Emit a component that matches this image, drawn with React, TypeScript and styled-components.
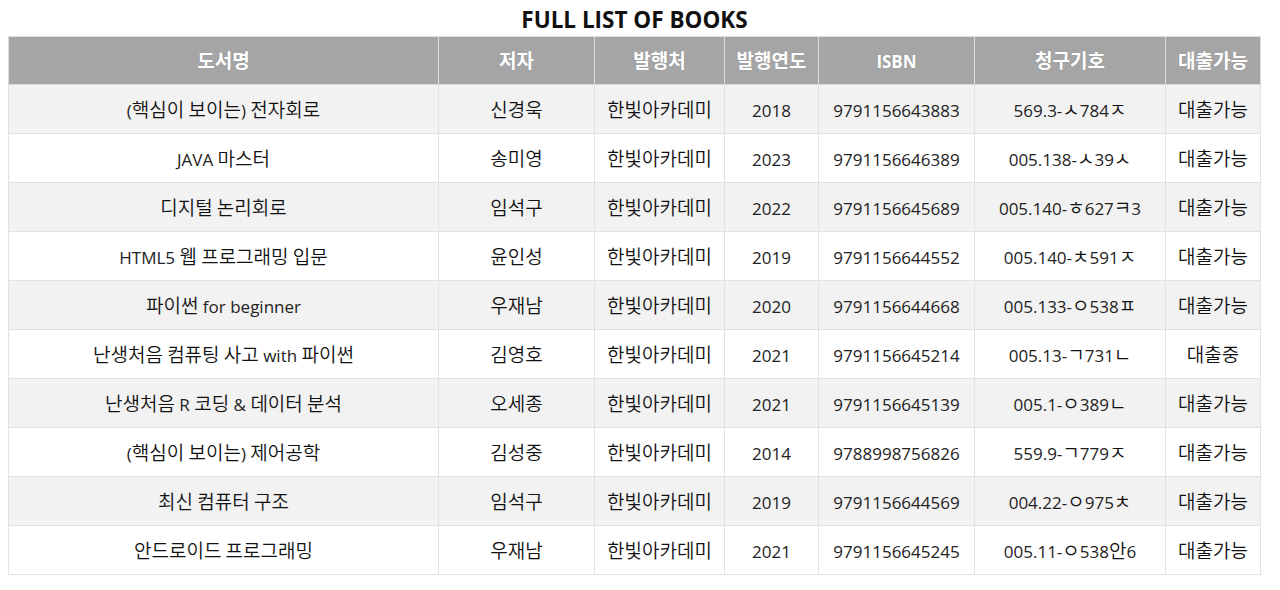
import React from 'react';
import styled, { createGlobalStyle } from 'styled-components';

/**
 * Define stylesheet.
 */
const GlobalStyle = createGlobalStyle`
    body {
        margin: 8px;
        background-color: #fff;
        font-family: "Open Sans", "Noto Sans CJK KR", sans-serif;
        color: #222;
    }
`;
const Table = styled.table`
    width: 1252px;
    table-layout: fixed;
    border-collapse: collapse;
`;
const Caption = styled.caption`
    height: 24px;
    padding-bottom: 4px;
    font-size: 22.5px;
    font-weight: 700;
    line-height: 24px;
    color: #111;
`;
const HeadCell = styled.th`
    height: 46px;
    padding: 1px 0 0;
    font-size: 17px;
    font-weight: 700;
    color: #fff;
    background-color: #a5a5a5;
    border: 1px solid #dcdcdc;
    text-shadow: 0 0 1px rgba(0,0,0,.15);
`;
const Row = styled.tr<{ striped: boolean }>`
    background-color: ${(props) => props.striped ? '#f2f2f2' : '#fff'};
`;
const Cell = styled.td`
    height: 46px;
    padding: 2px 0 0;
    font-size: 17px;
    text-align: center;
    border: 1px solid #e2e2e2;
`;
const Hangul = styled.span<{ strong?: boolean }>`
    font-family: "Noto Sans CJK KR", sans-serif;
    font-size: 19px;
    font-weight: ${(props) => props.strong ? 700 : 350};
    line-height: 1;
    color: ${(props) => props.strong ? '#fff' : '#111'};
`;

const columns = [
    { label: '도서명', width: 430 },
    { label: '저자', width: 156 },
    { label: '발행처', width: 130 },
    { label: '발행연도', width: 94 },
    { label: 'ISBN', width: 156 },
    { label: '청구기호', width: 191 },
    { label: '대출가능', width: 95 }
];

const books = [
    ['(핵심이 보이는) 전자회로', '신경욱', '한빛아카데미', '2018', '9791156643883', '569.3-ㅅ784ㅈ', '대출가능'],
    ['JAVA 마스터', '송미영', '한빛아카데미', '2023', '9791156646389', '005.138-ㅅ39ㅅ', '대출가능'],
    ['디지털 논리회로', '임석구', '한빛아카데미', '2022', '9791156645689', '005.140-ㅎ627ㅋ3', '대출가능'],
    ['HTML5 웹 프로그래밍 입문', '윤인성', '한빛아카데미', '2019', '9791156644552', '005.140-ㅊ591ㅈ', '대출가능'],
    ['파이썬 for beginner', '우재남', '한빛아카데미', '2020', '9791156644668', '005.133-ㅇ538ㅍ', '대출가능'],
    ['난생처음 컴퓨팅 사고 with 파이썬', '김영호', '한빛아카데미', '2021', '9791156645214', '005.13-ㄱ731ㄴ', '대출중'],
    ['난생처음 R 코딩 & 데이터 분석', '오세종', '한빛아카데미', '2021', '9791156645139', '005.1-ㅇ389ㄴ', '대출가능'],
    ['(핵심이 보이는) 제어공학', '김성중', '한빛아카데미', '2014', '9788998756826', '559.9-ㄱ779ㅈ', '대출가능'],
    ['최신 컴퓨터 구조', '임석구', '한빛아카데미', '2019', '9791156644569', '004.22-ㅇ975ㅊ', '대출가능'],
    ['안드로이드 프로그래밍', '우재남', '한빛아카데미', '2021', '9791156645245', '005.11-ㅇ538안6', '대출가능']
];

/**
 * Korean glyphs run a little wider than the Latin ones in the original font.
 */
function Text({ value, strong }: { value: string; strong?: boolean }) {
    const parts = value.split(/([\uAC00-\uD7A3\u3131-\u318E]+(?: [\uAC00-\uD7A3\u3131-\u318E]+)*)/);
    return (
        <>
            {parts.map((part, i) => i % 2 === 1 ? <Hangul key={i} strong={strong}>{part}</Hangul> : part)}
        </>
    );
}

/**
 * Render layout.
 */
export default function App() {
    return (
        <>
            <GlobalStyle />
            <Table>
                <Caption>FULL LIST OF BOOKS</Caption>
                <colgroup>
                    {columns.map((col) => <col key={col.label} style={{ width: col.width }} />)}
                </colgroup>
                <thead>
                    <tr>
                        {columns.map((col) => <HeadCell key={col.label}><Text value={col.label} strong /></HeadCell>)}
                    </tr>
                </thead>
                <tbody>
                    {books.map((book, i) => (
                        <Row key={book[4]} striped={i % 2 === 0}>
                            {book.map((value, j) => <Cell key={j}><Text value={value} /></Cell>)}
                        </Row>
                    ))}
                </tbody>
            </Table>
        </>
    );
}
